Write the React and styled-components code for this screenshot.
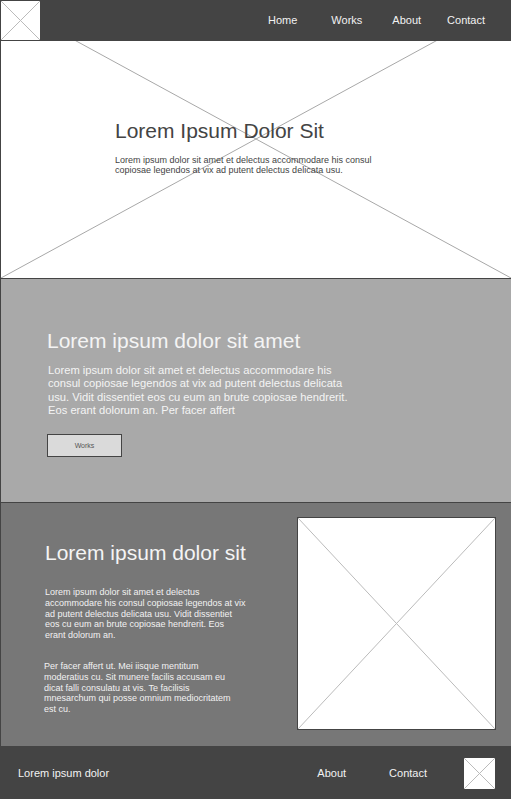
import React from "react";
import styled, { createGlobalStyle } from "styled-components";

const GlobalStyle = createGlobalStyle`
  body {
    margin: 0;
    font-family: "Liberation Sans", Arial, sans-serif;
    background: #ffffff;
  }
  * {
    box-sizing: border-box;
  }
`;

// placeholder cross used for every image slot
const Cross = ({ viewBox = "0 0 100 100", w = 100, h = 100, color = "#bbb" }) => (
  <CrossSvg viewBox={viewBox} preserveAspectRatio="none">
    <line x1="0" y1="0" x2={w} y2={h} stroke={color} strokeWidth="1" vectorEffect="non-scaling-stroke" />
    <line x1={w} y1="0" x2="0" y2={h} stroke={color} strokeWidth="1" vectorEffect="non-scaling-stroke" />
  </CrossSvg>
);

const navLinks = [
  { label: "Home", gap: 0 },
  { label: "Works", gap: 34 },
  { label: "About", gap: 30 },
  { label: "Contact", gap: 26 },
];

const App = () => {
  return (
    <Page>
      <GlobalStyle />
      <Header>
        <Logo $size={41}>
          <Cross />
        </Logo>
        <Nav>
          {navLinks.map((link) => (
            <NavLink key={link.label} $gap={link.gap}>
              {link.label}
            </NavLink>
          ))}
        </Nav>
      </Header>

      <Hero>
        <HeroBg>
          {/* the hero picture starts under the header */}
          <Cross viewBox="0 41 511 237" w={511} h={278} color="#a8a8a8" />
        </HeroBg>
        <HeroContent>
          <HeroTitle>Lorem Ipsum Dolor Sit</HeroTitle>
          <HeroText>
            Lorem ipsum dolor sit amet et delectus accommodare his consul
            copiosae legendos at vix ad putent delectus delicata usu.
          </HeroText>
        </HeroContent>
      </Hero>

      <Intro>
        <SectionTitle>Lorem ipsum dolor sit amet</SectionTitle>
        <IntroText>
          Lorem ipsum dolor sit amet et delectus accommodare his consul copiosae
          legendos at vix ad putent delectus delicata usu. Vidit dissentiet eos
          cu eum an brute copiosae hendrerit. Eos erant dolorum an. Per facer
          affert
        </IntroText>
        <Button>Works</Button>
      </Intro>

      <Feature>
        <FeatureText>
          <SectionTitle>Lorem ipsum dolor sit</SectionTitle>
          <SmallText $width={202} $top={22}>
            Lorem ipsum dolor sit amet et delectus accommodare his consul
            copiosae legendos at vix ad putent delectus delicata usu. Vidit
            dissentiet eos cu eum an brute copiosae hendrerit. Eos erant dolorum
            an.
          </SmallText>
          <SmallText $width={192} $top={20} $shift={-1}>
            Per facer affert ut. Mei iisque mentitum moderatius cu. Sit munere
            facilis accusam eu dicat falli consulatu at vis. Te facilisis
            mnesarchum qui posse omnium mediocritatem est cu.
          </SmallText>
        </FeatureText>
        <FeatureImage>
          <Cross />
        </FeatureImage>
      </Feature>

      <Footer>
        <FooterBrand>Lorem ipsum dolor</FooterBrand>
        <FooterNav>
          <FooterLink>About</FooterLink>
          <FooterLink>Contact</FooterLink>
        </FooterNav>
        <Logo $size={31} $plain>
          <Cross />
        </Logo>
      </Footer>
    </Page>
  );
};

const Page = styled.div`
  width: 511px;
  overflow: hidden;
`;

const CrossSvg = styled.svg`
  display: block;
  width: 100%;
  height: 100%;
`;

const Header = styled.header`
  display: flex;
  align-items: center;
  height: 41px;
  padding-bottom: 1px;
  background: #444444;
`;

const Logo = styled.div`
  width: ${(p) => p.$size}px;
  height: ${(p) => p.$size}px;
  flex-shrink: 0;
  align-self: ${(p) => (p.$plain ? "center" : "flex-start")};
  background: #ffffff;
  border: ${(p) => (p.$plain ? "none" : "1px solid #444")};
`;

const Nav = styled.nav`
  display: flex;
  align-items: center;
  margin-left: auto;
  padding-right: 26px;
`;

const NavLink = styled.a`
  margin-left: ${(p) => p.$gap}px;
  font-size: 11px;
  color: #f2f2f2;
  cursor: pointer;
`;

const Hero = styled.section`
  position: relative;
  height: 238px;
  background: #ffffff;
  border-left: 1px solid #444;
  border-bottom: 1px solid #444;
`;

const HeroBg = styled.div`
  position: absolute;
  inset: 0;
`;

const HeroContent = styled.div`
  position: relative;
  display: flex;
  flex-direction: column;
  padding: 78px 0 0 114px;
`;

const HeroTitle = styled.h1`
  margin: 0;
  font-size: 21px;
  font-weight: normal;
  line-height: 24px;
  color: #444444;
`;

const HeroText = styled.p`
  margin: 12px 0 0;
  width: 272px;
  font-size: 9px;
  line-height: 10.4px;
  color: #444444;
`;

const Intro = styled.section`
  display: flex;
  flex-direction: column;
  align-items: flex-start;
  height: 224px;
  padding: 50px 0 0 46px;
  background: #a9a9a9;
  border-left: 1px solid #444;
  border-bottom: 1px solid #444;
`;

const SectionTitle = styled.h2`
  margin: 0;
  font-size: 21px;
  font-weight: normal;
  line-height: 24px;
  color: #f4f4f4;
`;

const IntroText = styled.p`
  margin: 11px 0 0 1px;
  width: 312px;
  font-size: 11.2px;
  line-height: 13.4px;
  color: #f4f4f4;
`;

const Button = styled.button`
  margin-top: 16px;
  width: 75px;
  height: 23px;
  padding: 0;
  background: #dadada;
  border: 1px solid #444;
  font-family: inherit;
  font-size: 7px;
  color: #555555;
`;

const Feature = styled.section`
  display: flex;
  justify-content: space-between;
  height: 243px;
  padding: 14px 15px 15px 44px;
  background: #777777;
  border-left: 1px solid #444;
`;

const FeatureText = styled.div`
  display: flex;
  flex-direction: column;
  padding-top: 24px;
`;

const SmallText = styled.p`
  margin: ${(p) => p.$top}px 0 0 ${(p) => p.$shift || 0}px;
  width: ${(p) => p.$width}px;
  font-size: 9px;
  line-height: 10.8px;
  color: #f2f2f2;
`;

const FeatureImage = styled.div`
  width: 199px;
  height: 213px;
  background: #ffffff;
  border: 1px solid #444;
`;

const Footer = styled.footer`
  display: flex;
  align-items: center;
  height: 54px;
  padding: 0 16px 0 18px;
  background: #444444;
`;

const FooterBrand = styled.span`
  font-size: 11px;
  color: #f2f2f2;
`;

const FooterNav = styled.nav`
  display: flex;
  gap: 43px;
  margin-left: auto;
  margin-right: 37px;
`;

const FooterLink = styled.a`
  font-size: 11px;
  color: #f2f2f2;
  cursor: pointer;
`;

export default App;
